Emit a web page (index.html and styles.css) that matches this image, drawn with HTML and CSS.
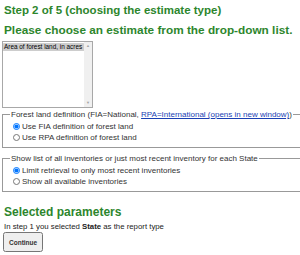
FILE: index.html
```html
<!DOCTYPE html>
<html>
<head>
    <link rel="stylesheet" href="styles.css">
</head>
<body>
    <h1>Step 2 of 5 (choosing the estimate type)</h1>
    <h2>Please choose an estimate from the drop-down list.</h2>
    <div class="listbox">
        <select class="estimate" size="6">
            <option selected>Area of forest land, in acres</option>
        </select>
        <div class="scrollbar"><span>&#9650;</span><span>&#9660;</span></div>
    </div>
    <fieldset>
        <legend>Forest land definition (FIA=National, <a href="#">RPA=International (opens in new window)</a>)</legend>
        <label><input type="radio" name="def" checked>Use FIA definition of forest land</label>
        <label><input type="radio" name="def">Use RPA definition of forest land</label>
    </fieldset>
    <fieldset class="second">
        <legend>Show list of all inventories or just most recent inventory for each State</legend>
        <label><input type="radio" name="inv" checked>Limit retrieval to only most recent inventories</label>
        <label><input type="radio" name="inv">Show all available inventories</label>
    </fieldset>
    <h2 class="params">Selected parameters</h2>
    <p class="summary">In step 1 you selected <b>State</b> as the report type</p>
    <button>Continue</button>
</body>
</html>
```

FILE: styles.css
```css
body {
    margin: 0;
    padding: 4px 4px 0 4px;
    font-family: "Liberation Sans", Arial, sans-serif;
    font-size: 8px;
    color: #222;
}
h1 {
    color: #2d862d;
    font-size: 11.5px;
    line-height: 13px;
    margin: 0 0 7px 0;
}
h2 {
    color: #2d862d;
    font-size: 11.8px;
    line-height: 13px;
    margin: 0 0 4px 0;
}
.listbox {
    display: flex;
    width: 89px;
    height: 65px;
    margin-left: -2px;
    border: 1px solid #a8a8a8;
}
.estimate {
    flex: 1;
    min-width: 0;
    height: 100%;
    margin: 0;
    padding: 1px 0;
    font-family: "Liberation Sans", Arial, sans-serif;
    font-size: 6.4px;
    border: none;
    outline: none;
}
.estimate option {
    padding: 0 1px;
}
.estimate option:checked {
    background: #cdcdcd;
    color: #000;
}
.scrollbar {
    width: 8px;
    background: #f0f0f0;
    display: flex;
    flex-direction: column;
    justify-content: space-between;
    align-items: center;
    font-size: 4px;
    line-height: 8px;
    color: #a3a3a3;
}
fieldset {
    margin: 2px -6px 0 -2px;
    padding: 2px 6px 4px 10px;
    border: 1px solid #999;
}
.second {
    margin-top: 6px;
}
legend {
    padding: 0 1px;
    margin-left: -3px;
    font-size: 8px;
    line-height: 9px;
    color: #333;
}
a {
    color: #1a3fb3;
}
label {
    display: flex;
    align-items: center;
    height: 11px;
    color: #333;
}
input[type=radio] {
    width: 7px;
    height: 7px;
    margin: 0 2px 0 0;
}
.params {
    font-size: 12px;
    line-height: 14px;
    margin: 13px 0 3px 0;
}
.summary {
    margin: 0 0 1px 0;
    font-size: 7.8px;
    line-height: 9px;
}
button {
    font-family: "Liberation Sans", Arial, sans-serif;
    font-size: 6.5px;
    font-weight: bold;
    height: 20px;
    padding: 0 4px;
    margin-left: -1px;
    color: #333;
}
```
